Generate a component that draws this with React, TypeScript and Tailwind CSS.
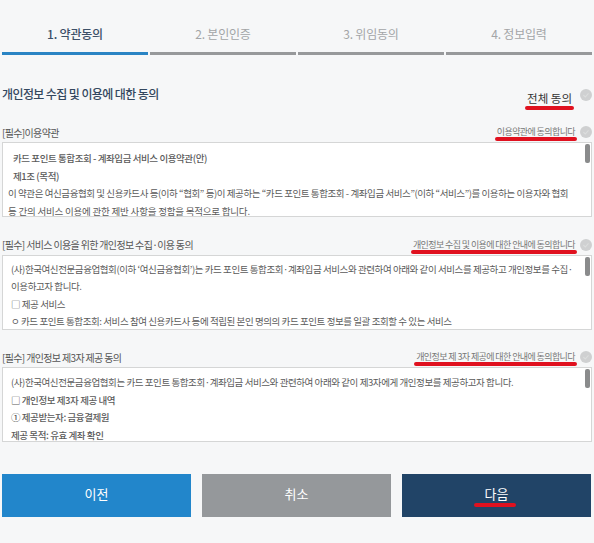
import type { ReactNode } from "react";

const steps = ["1. 약관동의", "2. 본인인증", "3. 위임동의", "4. 정보입력"];

function CheckDot() {
  return (
    <svg width="12" height="12" viewBox="0 0 12 12" className="shrink-0">
      <circle cx="6" cy="6" r="6" fill="#cfd0d1" />
      <path d="M3.4 6.1l1.9 1.9 3.2-3.6" fill="none" stroke="#dcdddd" strokeWidth="1.1" />
    </svg>
  );
}

function Marked({ children, low = false }: { children: ReactNode; low?: boolean }) {
  return (
    <span className="relative inline-block">
      {children}
      <span
        className={`absolute -left-[2px] -right-[2px] h-[4px] rounded-full bg-[#e0111f] ${
          low ? "-bottom-[4px]" : "-bottom-[3px]"
        }`}
      />
    </span>
  );
}

function TermBox({
  label,
  agree,
  top,
  children,
}: {
  label: string;
  agree: string;
  top: string;
  children: ReactNode;
}) {
  return (
    <section className="mt-[17.5px]">
      <div className="flex h-[20px] items-center justify-between">
        <span className="text-[10px] tracking-[-0.65px] text-[#555]">{label}</span>
        <div className="flex items-center gap-[5px]">
          <span className="text-[9px] leading-[12px] tracking-[-0.6px] text-[#777]">
            <Marked>{agree}</Marked>
          </span>
          <CheckDot />
        </div>
      </div>
      <div
        className={`relative h-[75px] overflow-hidden border border-[#d5d6d6] bg-white pl-[8px] text-[9.5px] leading-[17.5px] tracking-[-0.42px] text-[#5a5a5a] ${top}`}
      >
        {children}
        <span className="absolute right-[1px] top-[1px] h-[19px] w-[5px] rounded-[2px] bg-[#8a8b8c]" />
      </div>
    </section>
  );
}

export default function App() {
  return (
    <div className="h-[543px] w-[594px] overflow-hidden bg-[#f6f7f8] px-[2px] font-['Noto_Sans_CJK_KR','Noto_Sans',sans-serif]">
      <nav className="grid grid-cols-4 gap-[2px] pt-[24px]">
        {steps.map((step, i) => (
          <div key={step}>
            <div
              className={`flex h-[19px] items-center justify-center text-[12px] tracking-[-0.2px] ${
                i === 0 ? "font-medium text-[#3c5068]" : "text-[#a3a5a7]"
              }`}
            >
              {step}
            </div>
            <div className={`mt-[9px] h-[3px] ${i === 0 ? "bg-[#2a84c4]" : "bg-[#97999b]"}`} />
          </div>
        ))}
      </nav>

      <div className="mt-[30px] flex h-[19.5px] items-start justify-between">
        <h2 className="text-[12px] font-medium leading-[18px] tracking-[-0.6px] text-[#33475e]">
          개인정보 수집 및 이용에 대한 동의
        </h2>
        <div className="flex items-start gap-[8px]">
          <span className="mt-[5px] text-[11.5px] leading-[16px] text-[#333]">
            <Marked low>전체 동의</Marked>
          </span>
          <span className="mt-[4px]">
            <CheckDot />
          </span>
        </div>
      </div>

      <TermBox label="[필수]이용약관" agree="이용약관에 동의합니다" top="pt-[7px]">
        <p className="pl-[2px] font-medium">카드 포인트 통합조회 - 계좌입금 서비스 이용약관(안)</p>
        <p className="pl-[2px] font-medium">제1조 (목적)</p>
        <p className="-ml-[3px] whitespace-nowrap">
          이 약관은 여신금융협회 및 신용카드사 등(이하 “협회” 등)이 제공하는 “카드 포인트 통합조회 - 계좌입금 서비스”(이하 “서비스”)를 이용하는 이용자와 협회
        </p>
        <p className="-ml-[3px] whitespace-nowrap tracking-[-0.2px]">등 간의 서비스 이용에 관한 제반 사항을 정함을 목적으로 합니다.</p>
      </TermBox>

      <TermBox
        label="[필수] 서비스 이용을 위한 개인정보 수집·이용 동의"
        agree="개인정보 수집 및 이용에 대한 안내에 동의합니다"
        top="pt-[5px]"
      >
        <p className="whitespace-nowrap">
          (사)한국여신전문금융업협회(이하 ‘여신금융협회’)는 카드 포인트 통합조회·계좌입금 서비스와 관련하여 아래와 같이 서비스를 제공하고 개인정보를 수집·
        </p>
        <p>이용하고자 합니다.</p>
        <p>□ 제공 서비스</p>
        <p className="whitespace-nowrap">ㅇ 카드 포인트 통합조회: 서비스 참여 신용카드사 등에 적립된 본인 명의의 카드 포인트 정보를 일괄 조회할 수 있는 서비스</p>
      </TermBox>

      <TermBox
        label="[필수] 개인정보 제3자 제공 동의"
        agree="개인정보 제 3자 제공에 대한 안내에 동의합니다"
        top="pt-[6px]"
      >
        <p className="whitespace-nowrap">
          (사)한국여신전문금융업협회는 카드 포인트 통합조회·계좌입금 서비스와 관련하여 아래와 같이 제3자에게 개인정보를 제공하고자 합니다.
        </p>
        <p className="font-medium">□ 개인정보 제3자 제공 내역</p>
        <p className="font-medium">① 제공받는자: 금융결제원</p>
        <p className="font-medium">제공 목적: 유효 계좌 확인</p>
      </TermBox>

      <div className="mt-[32px] grid grid-cols-3 gap-[11px] pr-px text-[13px] text-white">
        <button className="h-[43px] bg-[#2286cb] pb-[3px]">이전</button>
        <button className="h-[43px] bg-[#95989b] pb-[3px]">취소</button>
        <button className="h-[43px] bg-[#214467] pb-[3px]">
          <span className="relative inline-block">
            다음
            <span className="absolute -left-[11px] -right-[8px] -bottom-[3px] h-[4px] rounded-full bg-[#e0111f]" />
          </span>
        </button>
      </div>
    </div>
  );
}
